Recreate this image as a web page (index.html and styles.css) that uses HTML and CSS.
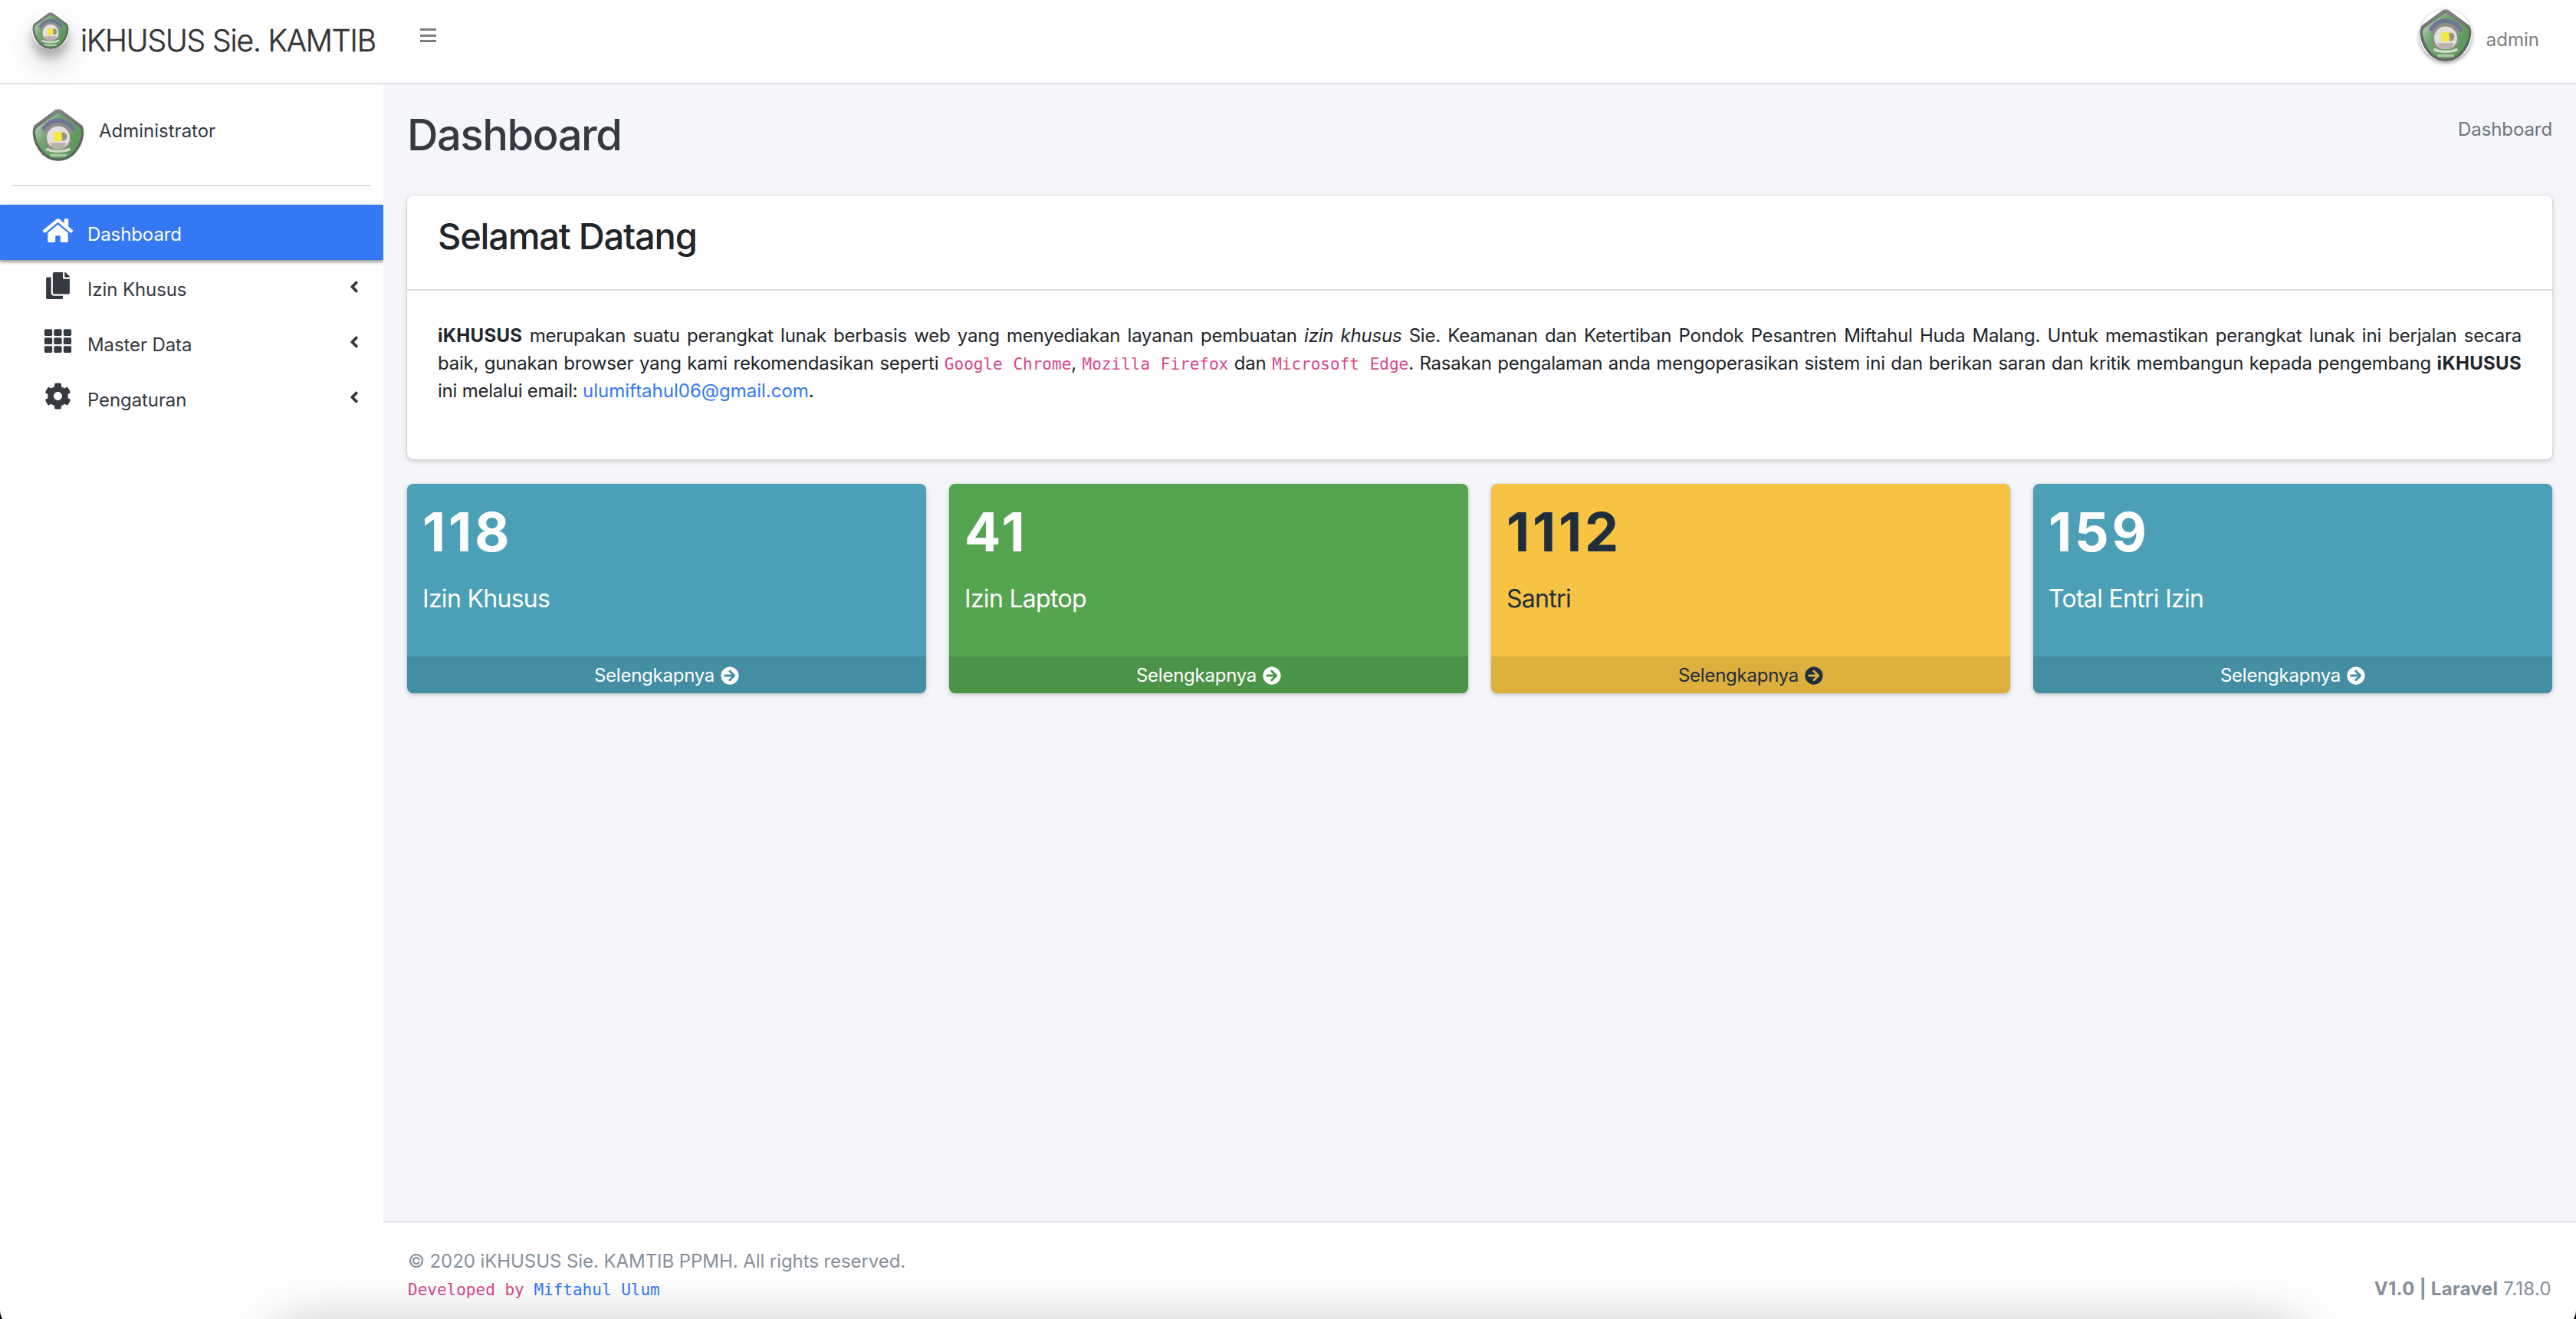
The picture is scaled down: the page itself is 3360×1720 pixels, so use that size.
FILE: index.html
```html
<!DOCTYPE html>
<html lang="id">
<head>
<meta charset="utf-8">
<title>iKHUSUS Sie. KAMTIB</title>
<link rel="stylesheet" href="styles.css">
</head>
<body>
<svg class="defs" aria-hidden="true">
  <defs>
    <linearGradient id="rim" x1="0" y1="0" x2="0" y2="1"><stop offset="0" stop-color="#838683"/><stop offset=".5" stop-color="#626763"/><stop offset="1" stop-color="#5d665d"/></linearGradient>
    <linearGradient id="green" x1="0" y1="0" x2="1" y2=".7"><stop offset="0" stop-color="#cfe0cf"/><stop offset=".4" stop-color="#71a571"/><stop offset="1" stop-color="#569856"/></linearGradient>
  </defs>
  <symbol id="crest" viewBox="0 0 100 100">
    <path fill="url(#rim)" d="M44 2Q50-1 56 2L95 31Q100 36 99 48Q97 70 81 87Q67 100 50 100Q33 100 19 87Q3 70 1 48Q0 36 5 31Z"/>
    <path fill="url(#green)" d="M50 7L91 36Q95 40 94 49Q91 68 78 83Q65 95 50 95Q35 95 22 83Q9 68 6 49Q5 40 9 36Z"/>
    <path fill="none" stroke="#71759a" stroke-width="8" d="M20 41Q32 22 50 22Q68 22 80 41"/>
    <path fill="none" stroke="#8f8d88" stroke-width="7" d="M24 49Q32 31 50 31Q68 31 76 49M26 58Q30 72 40 77M74 58Q70 72 60 77"/>
    <circle cx="50" cy="55" r="22" fill="#e4e0de"/>
    <path fill="#b8b1ac" d="M34 65L66 65L60 76L40 76Z"/>
    <circle cx="59" cy="53" r="8" fill="#9c9280"/>
    <path fill="#f5e93c" d="M41 46L56 43L58 61L43 63Z"/>
    <path fill="none" stroke="#cfdccb" stroke-width="5" d="M27 77Q38 82 50 81Q62 82 73 77"/>
    <path fill="none" stroke="#a6cca4" stroke-width="5" d="M34 89H66"/>
  </symbol>
  <symbol id="home" viewBox="0 0 576 512"><path d="M280.37 148.26L96 300.11V464a16 16 0 0 0 16 16l112.06-.29a16 16 0 0 0 15.92-16V368a16 16 0 0 1 16-16h64a16 16 0 0 1 16 16v95.64a16 16 0 0 0 16 16.05L464 480a16 16 0 0 0 16-16V300L295.67 148.26a12.19 12.19 0 0 0-15.3 0zM571.6 251.47L488 182.56V44.05a12 12 0 0 0-12-12h-56a12 12 0 0 0-12 12v72.61L318.47 43a48 48 0 0 0-61 0L4.34 251.47a12 12 0 0 0-1.6 16.9l25.5 31A12 12 0 0 0 45.15 301l235.22-193.74a12.19 12.19 0 0 1 15.3 0L530.9 301a12 12 0 0 0 16.9-1.6l25.5-31a12 12 0 0 0-1.7-16.93z"/></symbol>
  <symbol id="copy" viewBox="0 0 448 512"><path d="M320 448v40c0 13.255-10.745 24-24 24H24c-13.255 0-24-10.745-24-24V120c0-13.255 10.745-24 24-24h72v296c0 30.879 25.121 56 56 56h168zm0-344V0H152c-13.255 0-24 10.745-24 24v368c0 13.255 10.745 24 24 24h272c13.255 0 24-10.745 24-24V128H344c-13.2 0-24-10.8-24-24zm120.971-31.029L375.029 7.029A24 24 0 0 0 358.059 0H352v96h96v-6.059a24 24 0 0 0-7.029-16.97z"/></symbol>
  <symbol id="grid" viewBox="0 0 512 512"><rect x="0" y="32" width="149" height="128" rx="24"/><rect x="181" y="32" width="149" height="128" rx="24"/><rect x="363" y="32" width="149" height="128" rx="24"/><rect x="0" y="192" width="149" height="128" rx="24"/><rect x="181" y="192" width="149" height="128" rx="24"/><rect x="363" y="192" width="149" height="128" rx="24"/><rect x="0" y="352" width="149" height="128" rx="24"/><rect x="181" y="352" width="149" height="128" rx="24"/><rect x="363" y="352" width="149" height="128" rx="24"/></symbol>
  <symbol id="cog" viewBox="0 0 512 512"><path d="M487.4 315.7l-42.6-24.6c4.3-23.2 4.3-47 0-70.2l42.6-24.6c4.9-2.8 7.1-8.6 5.5-14-11.1-35.6-30-67.8-54.7-94.6-3.8-4.1-10-5.1-14.8-2.3L380.8 110c-17.9-15.4-38.5-27.3-60.8-35.1V25.8c0-5.6-3.9-10.5-9.4-11.7-36.7-8.2-74.3-7.8-109.2 0-5.5 1.2-9.4 6.1-9.4 11.7V75c-22.2 7.9-42.8 19.8-60.8 35.1L88.7 85.5c-4.9-2.8-11-1.9-14.8 2.3-24.7 26.7-43.6 58.9-54.7 94.6-1.7 5.4.6 11.2 5.5 14L67.3 221c-4.3 23.2-4.3 47 0 70.2l-42.6 24.6c-4.9 2.8-7.1 8.6-5.5 14 11.1 35.6 30 67.8 54.7 94.6 3.8 4.1 10 5.1 14.8 2.3l42.6-24.6c17.9 15.4 38.5 27.3 60.8 35.1v49.2c0 5.6 3.9 10.5 9.4 11.7 36.7 8.2 74.3 7.8 109.2 0 5.5-1.2 9.4-6.1 9.4-11.7v-49.2c22.2-7.9 42.8-19.8 60.8-35.1l42.6 24.6c4.9 2.8 11 1.9 14.8-2.3 24.7-26.7 43.6-58.9 54.7-94.6 1.5-5.5-.7-11.3-5.6-14.1zM256 336c-44.1 0-80-35.9-80-80s35.9-80 80-80 80 35.9 80 80-35.9 80-80 80z"/></symbol>
  <symbol id="angle" viewBox="0 0 256 512"><path d="M31.7 239l136-136c9.4-9.4 24.6-9.4 33.9 0l22.6 22.6c9.4 9.4 9.4 24.6 0 33.9L127.9 256l96.4 96.4c9.4 9.4 9.4 24.6 0 33.9L201.7 409c-9.4 9.4-24.6 9.4-33.9 0l-136-136c-9.5-9.4-9.5-24.6-.1-34z"/></symbol>
  <symbol id="arrow" viewBox="0 0 512 512"><path d="M256 8c137 0 248 111 248 248S393 504 256 504 8 393 8 256 119 8 256 8zm-28.9 143.6l75.5 72.4H120c-13.3 0-24 10.7-24 24v16c0 13.3 10.7 24 24 24h182.6l-75.5 72.4c-9.7 9.3-9.9 24.8-.4 34.3l11 10.9c9.4 9.4 24.6 9.4 33.9 0L404.3 273c9.4-9.4 9.4-24.6 0-33.9L271.6 106.3c-9.4-9.4-24.6-9.4-33.9 0l-11 10.9c-9.5 9.6-9.3 25.1.4 34.4z"/></symbol>
</svg>

<div class="app">
  <header class="topbar">
    <a class="brand"><svg class="brand-logo"><use href="#crest"/></svg><span class="brand-text">iKHUSUS Sie. KAMTIB</span></a>
    <span class="burger"><i></i><i></i><i></i></span>
    <span class="account"><svg class="account-logo"><use href="#crest"/></svg><span>admin</span></span>
  </header>

  <aside class="sidebar">
    <div class="user"><svg class="user-logo"><use href="#crest"/></svg><span>Administrator</span></div>
    <nav class="menu">
      <a class="item active"><svg class="icon"><use href="#home"/></svg><span>Dashboard</span></a>
      <a class="item"><svg class="icon"><use href="#copy"/></svg><span>Izin Khusus</span><svg class="angle"><use href="#angle"/></svg></a>
      <a class="item"><svg class="icon"><use href="#grid"/></svg><span>Master Data</span><svg class="angle"><use href="#angle"/></svg></a>
      <a class="item"><svg class="icon"><use href="#cog"/></svg><span>Pengaturan</span><svg class="angle"><use href="#angle"/></svg></a>
    </nav>
  </aside>

  <main class="content">
    <div class="page-head"><h1>Dashboard</h1><span class="crumb">Dashboard</span></div>
    <section class="card">
      <div class="card-head"><h2>Selamat Datang</h2></div>
      <p class="card-body"><b>iKHUSUS</b> merupakan suatu perangkat lunak berbasis web yang menyediakan layanan pembuatan <em>izin khusus</em> Sie. Keamanan dan Ketertiban Pondok Pesantren Miftahul Huda Malang. Untuk memastikan perangkat lunak ini berjalan secara baik,&nbsp;gunakan browser yang kami rekomendasikan seperti <code>Google Chrome</code>, <code>Mozilla Firefox</code> dan <code>Microsoft Edge</code>. Rasakan pengalaman anda mengoperasikan sistem ini dan berikan saran dan kritik membangun kepada pengembang <b>iKHUSUS</b> ini melalui email: <a class="link">ulumiftahul06@gmail.com</a>.</p>
    </section>
    <div class="boxes">
      <div class="box info"><div class="inner"><strong>118</strong><span>Izin Khusus</span></div><a class="more">Selengkapnya <svg><use href="#arrow"/></svg></a></div>
      <div class="box success"><div class="inner"><strong>41</strong><span>Izin Laptop</span></div><a class="more">Selengkapnya <svg><use href="#arrow"/></svg></a></div>
      <div class="box warning"><div class="inner"><strong>1112</strong><span>Santri</span></div><a class="more">Selengkapnya <svg><use href="#arrow"/></svg></a></div>
      <div class="box info"><div class="inner"><strong>159</strong><span>Total Entri Izin</span></div><a class="more">Selengkapnya <svg><use href="#arrow"/></svg></a></div>
    </div>
  </main>

  <footer class="footer">
    <div class="legal">© 2020 iKHUSUS Sie. KAMTIB PPMH. All rights reserved.<br><code>Developed by <a class="link">Miftahul Ulum</a></code></div>
    <div class="version"><b>V1.0 | Laravel</b> 7.18.0</div>
  </footer>
</div>
<div class="window-edge"></div>
</body>
</html>
```
FILE: styles.css
```css
* { box-sizing: border-box; }
body {
  margin: 0;
  font: 400 24px/36px Inter, "Liberation Sans", sans-serif;
  color: #212529;
  background: #fff;
  overflow: hidden;
}
h1, h2, p { margin: 0; }
svg { display: block; flex: none; fill: currentColor; }
.defs { position: absolute; width: 0; height: 0; }
code {
  font: 21px/1 "DejaVu Sans Mono", monospace;
  letter-spacing: 0;
  color: #d64a8a;
}
.link { color: #3478f6; }

.app {
  display: grid;
  grid-template: 110px 1fr 128px / 500px 1fr;
  grid-template-areas: "top top" "side main" "side foot";
  height: 1720px;
}

/* Top bar */
.topbar {
  grid-area: top;
  display: flex;
  align-items: flex-start;
  padding-right: 48px;
  border-bottom: 2px solid #dee2e6;
}
.brand { display: flex; width: 548px; padding: 16px 0 0 42px; color: #343434; }
.brand-logo {
  width: 48px;
  height: 48px;
  margin-right: 15px;
  border-radius: 50%;
  box-shadow: 0 20px 40px rgba(0,0,0,.19), 0 12px 12px rgba(0,0,0,.23);
}
.brand-text { margin-top: 13px; font-size: 39px; line-height: 48px; font-weight: 300; letter-spacing: -1.12px; white-space: nowrap; -webkit-text-stroke: .5px; }
.burger { display: flex; flex-direction: column; gap: 4.5px; margin-top: 37px; }
.burger i { width: 21px; height: 3px; background: #7f7f7f; }
.account { display: flex; gap: 19px; margin-left: auto; padding-top: 12px; color: #7f7f7f; }
.account span { margin-top: 22px; }
.account-logo { width: 68px; height: 68px; border-radius: 50%; box-shadow: 0 2px 6px rgba(0,0,0,.2), 0 2px 4px rgba(0,0,0,.24); }

/* Sidebar */
.sidebar { grid-area: side; color: #343a40; }
.user {
  display: flex;
  gap: 19px;
  height: 133px;
  margin: 0 16px 24px;
  padding: 32px 0 0 26px;
  border-bottom: 2px solid #dee2e6;
}
.user-logo { width: 68px; height: 68px; border-radius: 50%; }
.user span { margin-top: 11px; }
.item { display: flex; align-items: center; height: 72px; padding: 0 32px 0 51px; }
.item.active { color: #fff; background: #3478f6; box-shadow: 0 2px 6px rgba(0,0,0,.24), 0 2px 4px rgba(0,0,0,.3); }
.item span { padding-top: 6px; letter-spacing: -.1px; }
.icon { width: 49px; height: 35.2px; margin: 0 14px 5px 0; }
.angle { width: 12px; height: 24px; margin: 0 0 3px auto; }

/* Main column */
.content { grid-area: main; padding: 0 31px; background: #f4f6f9; }
.page-head { display: flex; justify-content: space-between; height: 145px; padding: 32px 0 0; }
h1 { font-size: 56px; line-height: 68px; font-weight: 500; letter-spacing: -1.4px; color: #343a40; }
.crumb { margin-top: 9px; letter-spacing: -.1px; color: #6c757d; }
.card {
  height: 344px;
  margin-bottom: 32px;
  background: #fff;
  border-radius: 8px;
  box-shadow: 0 0 2px rgba(0,0,0,.125), 0 2px 6px rgba(0,0,0,.2);
}
.card-head { height: 124px; padding: 25px 40px 0; border-bottom: 2px solid #dfdfdf; }
h2 { font-size: 47px; line-height: 56px; font-weight: 500; letter-spacing: -1.2px; }
.card-body { padding: 41px 40px 0; text-align: justify; letter-spacing: -.22px; }
.card-body b { letter-spacing: .3px; }
.card-body .link { letter-spacing: 0; }

/* Stat boxes */
.boxes { display: grid; grid-template-columns: repeat(4, 1fr); gap: 30px; }
.box {
  display: flex;
  flex-direction: column;
  height: 273px;
  border-radius: 8px;
  overflow: hidden;
  color: #fff;
  box-shadow: 0 0 2px rgba(0,0,0,.125), 0 2px 6px rgba(0,0,0,.2);
}
.info { background: #4b9fb6; }
.success { background: #54a450; }
.warning { background: #f6c343; color: #1f2d3d; }
.inner { display: flex; flex-direction: column; flex: 1; padding: 21px 20px 0; }
.inner strong { font-size: 70px; line-height: 84px; font-weight: 700; letter-spacing: 3.8px; }
.inner span { margin-top: 21px; font-size: 32px; line-height: 48px; letter-spacing: -.7px; }
.more {
  display: flex;
  align-items: center;
  justify-content: center;
  gap: 8px;
  height: 48px;
  padding-top: 1px;
  background: rgba(0,0,0,.1);
  letter-spacing: -.25px;
}
.more svg { width: 24px; height: 24px; }

/* Footer */
.footer {
  grid-area: foot;
  display: flex;
  justify-content: space-between;
  padding: 33px 32px 0 32px;
  border-top: 2px solid #dee2e6;
  color: #869099;
}
.legal { letter-spacing: -.07px; }
.version { margin-top: 36px; letter-spacing: .3px; }

/* Rounded window corners and the soft shadow along the bottom edge */
.window-edge { position: fixed; inset: 0; overflow: hidden; pointer-events: none; }
.window-edge::before {
  content: "";
  position: absolute;
  inset: 0 0 -9px;
  border-radius: 0 0 20px 20px;
  box-shadow: 0 0 0 20px #000;
}
.window-edge::after {
  content: "";
  position: absolute;
  top: 1738px;
  left: 365px;
  right: 365px;
  height: 200px;
  box-shadow: 0 0 80px rgba(0,0,0,.33);
}
```
